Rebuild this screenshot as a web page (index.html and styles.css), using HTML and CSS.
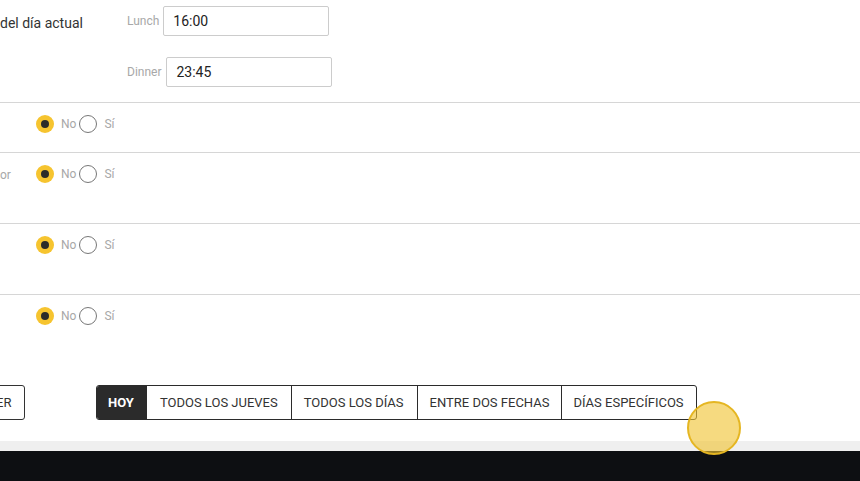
FILE: index.html
```html
<!DOCTYPE html>
<html lang="es">
<head>
<meta charset="utf-8">
<link rel="stylesheet" href="styles.css">
</head>
<body>
<div class="page">
  <section class="times">
    <div class="times-label">del día actual</div>
    <div class="times-fields">
      <div class="field"><span class="field-label">Lunch</span><span class="input">16:00</span></div>
      <div class="field"><span class="field-label field-label-wide">Dinner</span><span class="input">23:45</span></div>
    </div>
  </section>

  <section class="opt opt-short">
    <div class="opt-label"></div>
    <div class="radios">
      <span class="radio on"></span><span class="rlabel">No</span>
      <span class="radio"></span><span class="rlabel">Sí</span>
    </div>
  </section>
  <section class="opt">
    <div class="opt-label">or</div>
    <div class="radios">
      <span class="radio on"></span><span class="rlabel">No</span>
      <span class="radio"></span><span class="rlabel">Sí</span>
    </div>
  </section>
  <section class="opt">
    <div class="opt-label"></div>
    <div class="radios">
      <span class="radio on"></span><span class="rlabel">No</span>
      <span class="radio"></span><span class="rlabel">Sí</span>
    </div>
  </section>
  <section class="opt opt-last">
    <div class="opt-label"></div>
    <div class="radios">
      <span class="radio on"></span><span class="rlabel">No</span>
      <span class="radio"></span><span class="rlabel">Sí</span>
    </div>
  </section>

  <section class="actions">
    <span class="btn-single">ER</span>
    <div class="btn-group">
      <span class="seg active">HOY</span>
      <span class="seg">TODOS LOS JUEVES</span>
      <span class="seg seg-3">TODOS LOS DÍAS</span>
      <span class="seg seg-4">ENTRE DOS FECHAS</span>
      <span class="seg seg-5">DÍAS ESPECÍFICOS</span>
    </div>
  </section>

  <div class="band"></div>
  <footer class="footer"></footer>
  <div class="cursor"></div>
</div>
</body>
</html>
```
FILE: styles.css
```css
* { box-sizing: border-box; }
html, body { margin: 0; padding: 0; }
body {
  font-family: Roboto, "Liberation Sans", sans-serif;
  color: #333;
  background: #fff;
  width: 860px;
  height: 481px;
  overflow: hidden;
}
.page { position: relative; width: 860px; height: 481px; }

.times {
  display: flex;
  height: 103px;
  border-bottom: 1px solid #d6d6d6;
}
.times-label {
  width: 127px;
  font-size: 14px;
  padding-top: 15px;
  color: #333;
}
.times-fields {
  display: flex;
  flex-direction: column;
  gap: 21px;
  padding-top: 6px;
}
.field { display: flex; align-items: center; gap: 4px; }
.field-label { font-size: 12px; color: #a8a8a8; }
.field-label-wide { margin-right: 1px; }
.input {
  display: flex;
  align-items: center;
  width: 166px;
  height: 30px;
  border: 1px solid #ccc;
  border-radius: 2px;
  padding-left: 9px;
  font-size: 14px;
  color: #222;
}

.opt {
  display: flex;
  height: 71px;
  border-bottom: 1px solid #d6d6d6;
}
.opt-short { height: 50px; }
.opt-last { height: auto; border-bottom: 0; }
.opt-label {
  width: 36px;
  font-size: 12px;
  color: #a8a8a8;
  padding-top: 15px;
}
.radios {
  display: flex;
  align-items: center;
  height: 18px;
  margin-top: 12px;
}
.radio {
  width: 18px;
  height: 18px;
  border-radius: 50%;
  border: 1px solid #777;
  background: #fff;
  display: flex;
  align-items: center;
  justify-content: center;
}
.radio.on {
  border: 0;
  background: #f6c42f;
}
.radio.on::after {
  content: "";
  width: 8px;
  height: 8px;
  border-radius: 50%;
  background: #2a2a2a;
}
.rlabel {
  font-size: 12px;
  color: #a8a8a8;
  margin-left: 7px;
  margin-right: 3px;
}

.actions {
  display: flex;
  align-items: center;
  gap: 71px;
  margin-top: 60px;
  height: 35px;
}
.btn-single {
  display: flex;
  align-items: center;
  height: 35px;
  width: 40px;
  margin-left: -15px;
  padding-left: 10px;
  border: 1px solid #333;
  border-radius: 3px;
  font-size: 13px;
  color: #333;
}
.btn-group {
  display: flex;
  height: 35px;
  border: 1px solid #2b2b2b;
  border-radius: 3px;
  overflow: hidden;
}
.seg {
  display: flex;
  align-items: center;
  padding: 0 13px;
  font-size: 13px;
  color: #333;
  border-left: 1px solid #2b2b2b;
}
.seg:first-child { border-left: 0; }
.seg-3 { padding: 0 13px 0 12px; }
.seg-4 { padding: 0 12px; }
.seg-5 { padding: 0 12px 0 11px; }
.seg.active {
  background: #2b2b2b;
  color: #fff;
  font-weight: bold;
  padding: 0 12px 0 11px;
}

.band {
  margin-top: 21px;
  height: 10px;
  background: #efefef;
}
.footer {
  height: 30px;
  background: #0d0f12;
}

.cursor {
  position: absolute;
  left: 687px;
  top: 401px;
  width: 54px;
  height: 54px;
  border-radius: 50%;
  border: 2px solid #e5b622;
  background: rgba(240, 196, 50, 0.62);
}
```
